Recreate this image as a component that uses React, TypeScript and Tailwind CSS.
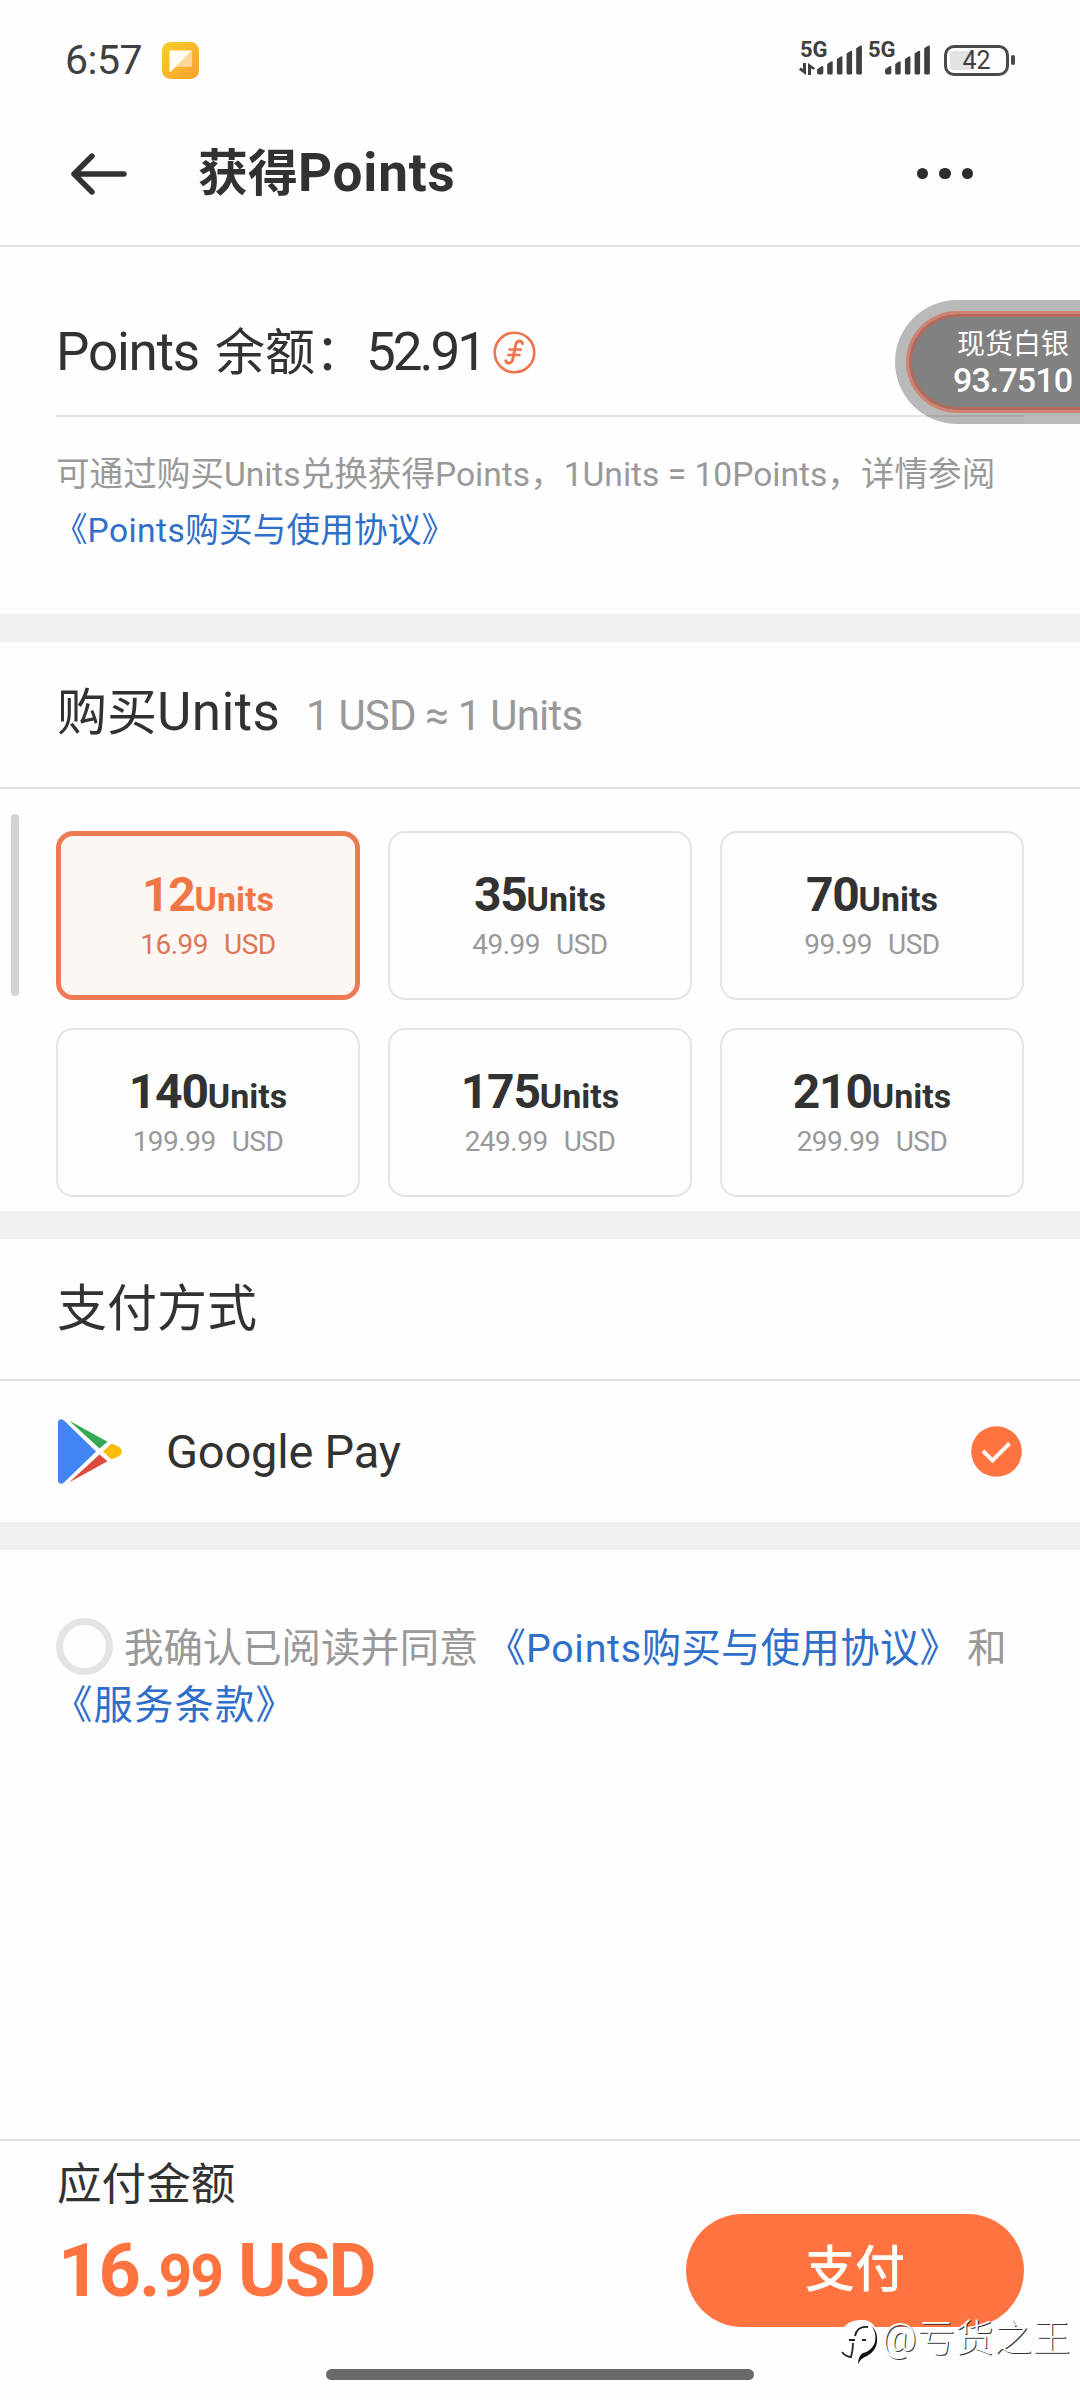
import { useState } from 'react';

const packages = [
  { units: 12, price: '16.99' },
  { units: 35, price: '49.99' },
  { units: 70, price: '99.99' },
  { units: 140, price: '199.99' },
  { units: 175, price: '249.99' },
  { units: 210, price: '299.99' },
];

function SignalBars() {
  return (
    <svg width="46" height="30" viewBox="0 0 46 30" fill="#3f3f3f">
      <path d="M0 25.5 Q0 24 1.5 23.2 L4.5 21.3 Q6.3 20.5 6.3 22.5 V27.5 Q6.3 29.5 4.5 29.5 H2 Q0 29.5 0 27.5Z" />
      <path d="M10.2 19 L14 16.4 Q15.7 15.6 15.7 17.5 V28 Q15.7 29.5 14.2 29.5 H11.7 Q10.2 29.5 10.2 28Z" />
      <path d="M19.9 14 L23.7 11.4 Q25.4 10.6 25.4 12.5 V28 Q25.4 29.5 23.9 29.5 H21.4 Q19.9 29.5 19.9 28Z" />
      <path d="M29.6 8.5 L33.4 5.9 Q35.1 5.1 35.1 7 V28 Q35.1 29.5 33.6 29.5 H31.1 Q29.6 29.5 29.6 28Z" />
      <path d="M39.2 3.3 L43 .7 Q44.9 0 44.9 1.8 V28 Q44.9 29.5 43.4 29.5 H40.7 Q39.2 29.5 39.2 28Z" />
    </svg>
  );
}

function StatusBar() {
  return (
    <div className="flex h-[102px] shrink-0 items-start text-[#3f3f3f]">
      <span className="ml-[65px] mt-[40px] w-[97px] text-[41px] leading-[40px] tracking-[-0.5px]">6:57</span>
      <svg className="mt-[42px]" width="37" height="37" viewBox="0 0 37 37">
        <defs>
          <linearGradient id="note" x1="0" y1="0" x2="1" y2="1">
            <stop offset="0" stopColor="#f6cf2c" />
            <stop offset="1" stopColor="#fb9f2c" />
          </linearGradient>
        </defs>
        <rect width="37" height="37" rx="8.5" fill="url(#note)" />
        <path d="M30 9 V23.5 Q30 25 28.5 25 H13.5Z" fill="#ffd79a" />
        <path d="M8.5 8.5 H30 L8.5 30Q7.5 30.5 7.5 29.5 V9.5 Q7.5 8.5 8.5 8.5Z" fill="#fffdf5" />
      </svg>
      <div className="ml-[600px] mt-[40px] flex h-[36px]">
        <div className="w-[18px]">
          <div className="pl-[1px] text-[22px] font-bold leading-[19px]">5G</div>
          <svg className="mt-[4px]" width="16" height="12" viewBox="0 0 16 12" fill="#3f3f3f">
            <path d="M4 0 H7 V12 L0 6.8 L1.5 4.6 L4 6Z" />
            <path d="M9 0 L16 5 L14.8 6.8 L12 5.4 V12 H9Z" />
          </svg>
        </div>
        <div className="pt-[5px]">
          <SignalBars />
        </div>
        <div className="ml-[5px] w-[17px] text-[22px] font-bold leading-[19px]">5G</div>
        <div className="pt-[5px]">
          <SignalBars />
        </div>
        <div className="ml-[13px] mt-[4px] flex items-center">
          <div className="flex h-[31px] w-[65px] items-center justify-center rounded-[10px] border-[3px] border-[#4a4a4a] bg-linear-to-r from-[#e3e3e3] from-40% to-transparent to-40% bg-clip-content p-[3px] text-[25px] leading-none">
            42
          </div>
          <div className="ml-[2px] h-[10px] w-[4px] rounded-full bg-[#4a4a4a]" />
        </div>
      </div>
    </div>
  );
}

function CoinIcon() {
  return (
    <svg width="43" height="43" viewBox="0 0 43 43" fill="none" stroke="#ec7550" strokeLinecap="round">
      <circle cx="21.5" cy="21.5" r="19.8" strokeWidth="2.6" />
      <path d="M29.5 12.5 C28.5 8.8 23.8 9.2 22.8 13.5 L19.8 28 C18.9 32.8 14 33.5 12.8 29.8" strokeWidth="2.9" />
      <path d="M16.5 18.5 H28 M15.3 24 H26.5" strokeWidth="2.6" />
    </svg>
  );
}

function GooglePlayIcon() {
  return (
    <svg width="65" height="65" viewBox="0 0 65 67" preserveAspectRatio="none">
      <path d="M0 3 Q.5 0 4 .3 L6 1.5 L38 33.5 L6 65.5 L4 66.7 Q.5 67 0 64Z" fill="#4285f4" />
      <path d="M11 1.5 L49.5 23.5 L41.5 30.5Z" fill="#34a853" />
      <path d="M11 65.5 L49.5 43.5 L41.5 36.5Z" fill="#dd4b3e" />
      <path d="M45 33.5 L53.5 25.2 L61 28.5 Q67 33.5 61 38.5 L53.5 41.8Z" fill="#fbbc04" />
    </svg>
  );
}

function PriceTicker() {
  return (
    <div className="absolute left-[895px] top-[300px] h-[124px] w-[185px] rounded-l-full bg-black/27 py-[11px] pl-[11px]">
      <div className="h-[102px] rounded-l-full border-y-[3px] border-l-[3px] border-[#cf8373]">
        <div className="flex h-full flex-col rounded-l-full border-y-[3px] border-l-[3px] border-[#b46a5b] bg-[#818181] pl-[45px] pt-[13px] text-white">
          <span className="whitespace-nowrap text-[28px] leading-[30px]">现货白银</span>
          <span className="-ml-[4px] mt-[3px] text-[34px] font-medium leading-[34px] tracking-[-0.9px]">93.7510</span>
        </div>
      </div>
    </div>
  );
}

function Watermark() {
  return (
    <div className="absolute left-[840px] top-[2316px] flex items-center text-white">
      <svg width="42" height="50" viewBox="0 0 42 50">
        <path d="M2 14 Q8 3 22 4 Q36 4 37 20 Q37 33 26 40 L12 44 L1 38Z" fill="#fff" />
        <path d="M31 10 Q37 16 35 26 Q32 35 23 37 Q18 40 18 48 Q21 42 27 40 Q36 35 37 26 Q38 15 31 10Z" fill="#111" />
        <path d="M28 11 Q17 10 15 20 M9 24 H15 M22 24 H26 M13 27 Q13 34 11 41 Q6 41 2 36" fill="none" stroke="#222" strokeWidth="1.8" />
      </svg>
      <span className="-mt-[7px] whitespace-nowrap text-[38px] font-light leading-[42px] tracking-[0.4px] [text-shadow:1px_1px_0_#333]">@亏货之王</span>
    </div>
  );
}

export default function App() {
  const [selected, setSelected] = useState(12);
  const [agreed, setAgreed] = useState(false);

  return (
    <div className="relative flex h-[2400px] w-[1080px] flex-col overflow-hidden bg-[#fefefe] font-[Roboto,'Noto_Sans_CJK_SC',sans-serif] text-[#323232]">
      <StatusBar />

      <header className="flex h-[145px] shrink-0 items-center border-b-2 border-[#e4e4e4]">
        <svg className="ml-[70px]" width="58" height="42" viewBox="0 0 58 42" fill="none" stroke="#323232" strokeWidth="5.4" strokeLinecap="round" strokeLinejoin="round">
          <path d="M54 21 H4 M22 3 L4 21 L22 39" />
        </svg>
        <h1 className="ml-[70px] whitespace-nowrap text-[50px] font-bold leading-[60px]">
          获得<span className="text-[53px] tracking-[0.8px]">Points</span>
        </h1>
        <div className="ml-auto mr-[107px] flex gap-[11px]">
          <i className="size-[11.5px] rounded-full bg-[#2c2c2c]" />
          <i className="size-[11.5px] rounded-full bg-[#2c2c2c]" />
          <i className="size-[11.5px] rounded-full bg-[#2c2c2c]" />
        </div>
      </header>

      <section className="h-[367px] shrink-0 px-[56px]">
        <div className="flex h-[170px] items-center whitespace-nowrap border-b-2 border-[#e6e6e6] pt-[42px] text-[50px]">
          <div className="flex items-baseline leading-[60px]">
            <span className="w-[159px] text-[53px] tracking-[-1.2px]">Points</span>
            <span className="w-[151px]">余额：</span>
            <span className="text-[53px] tracking-[-3px]">52.91</span>
          </div>
          <span className="ml-auto mr-[488px]">
            <CoinIcon />
          </span>
        </div>
        <p className="whitespace-nowrap pt-[30px] text-[33.6px] leading-[56px] text-[#999999]">
          可通过购买Units兑换获得Points，1Units = 10Points，详情参阅
          <br />
          <a className="-ml-[2px] text-[#2f6ec9]">
            《<span className="tracking-[0.4px]">Points</span>
            <span className="tracking-[0.2px]">购买与使用协议》</span>
          </a>
        </p>
      </section>

      <div className="h-[28px] shrink-0 bg-[#eff0f2]" />

      <section className="h-[569px] shrink-0">
        <div className="flex h-[147px] items-baseline whitespace-nowrap border-b-2 border-[#e4e4e4] pl-[57px] pt-[38px] leading-[64px]">
          <h2 className="w-[249px] text-[50px]">
            购买<span className="text-[53px] tracking-[0.4px]">Units</span>
          </h2>
          <span className="text-[42px] tracking-[-0.8px] text-[#999999]">1 USD ≈ 1 Units</span>
        </div>
        <div className="flex pt-[25px]">
          <div className="ml-[11px] h-[182px] w-[8px] rounded-full bg-[#d3d3d3]" />
          <div className="ml-[37px] mt-[17px] grid grid-cols-[304px_304px_304px] gap-[28px]">
            {packages.map((item) => {
              const active = item.units === selected;
              return (
                <button
                  key={item.units}
                  onClick={() => setSelected(item.units)}
                  className={`flex h-[169px] flex-col items-center justify-center rounded-[17px] pt-[2px] ${
                    active ? 'border-[5px] border-[#ec7a54] bg-[#fdf7f4] text-[#f27546]' : 'border-2 border-[#e4e4e4]'
                  }`}
                >
                  <span className="text-[48px] font-bold leading-[48px] tracking-[-1.2px]">
                    {item.units}
                    <span className="text-[34px] tracking-[0px]">Units</span>
                  </span>
                  <span className={`mt-[4px] text-[28px] leading-[36px] tracking-[-0.5px] ${active ? 'text-[#dd7558]' : 'text-[#999999]'}`}>
                    {item.price}
                    <span className="ml-[16px]">USD</span>
                  </span>
                </button>
              );
            })}
          </div>
        </div>
      </section>

      <div className="h-[28px] shrink-0 bg-[#eff0f2]" />

      <section className="h-[283px] shrink-0">
        <h2 className="h-[142px] border-b-2 border-[#e4e4e4] pl-[57px] pt-[38px] text-[50px] leading-[64px]">支付方式</h2>
        <div className="flex h-[141px] items-center pl-[58px] pr-[58px]">
          <GooglePlayIcon />
          <span className="ml-[43px] pt-[2px] text-[47px] tracking-[-0.2px]">Google Pay</span>
          <svg className="ml-auto" width="51" height="51" viewBox="0 0 51 51">
            <circle cx="25.5" cy="25.5" r="25.3" fill="#ff7340" />
            <path d="M12 25 L21.5 34.5 L38.5 17.5" fill="none" stroke="#fff8f0" strokeWidth="4" />
          </svg>
        </div>
      </section>

      <div className="h-[28px] shrink-0 bg-[#eff0f2]" />

      <section className="px-[56px] pt-[68px] text-[39.4px] leading-[56px] text-[#999999]">
        <div className="flex whitespace-nowrap">
          <button onClick={() => setAgreed(!agreed)} className={`mr-[11px] size-[57px] shrink-0 rounded-full border-[7px] ${agreed ? 'border-[#ff7340]' : 'border-[#e4e4e4]'}`} />
          <div className="flex pt-[3px]">
            我确认已阅读并同意
            <a className="ml-[8px] text-[#2f6ec9]">
              《<span className="tracking-[0.7px]">Points</span>
              <span className="tracking-[0.3px]">购买与使用协议》</span>
            </a>
            <span className="ml-[8px]">和</span>
          </div>
        </div>
        <a className="-ml-[3px] block pt-px tracking-[1.1px] text-[#2f6ec9]">《服务条款》</a>
      </section>

      <footer className="mt-auto h-[261px] shrink-0 border-t-2 border-[#e4e4e4] pl-[56px]">
        <div className="flex h-[228px]">
          <div className="pt-[17px]">
            <div className="pl-px text-[44.6px] leading-[54px]">应付金额</div>
            <div className="whitespace-nowrap pl-[2px] pt-[19px] text-[74px] font-bold leading-[80px] tracking-[-2px] text-[#ff7340]">
              16.<span className="text-[59px]">99</span>
              <span className="ml-[16px] tracking-[-2px]">USD</span>
            </div>
          </div>
          <button className="ml-auto mr-[56px] mt-[73px] h-[113px] w-[338px] rounded-full bg-[#ff7340] text-[50px] font-medium text-[#fffdf8]">支付</button>
        </div>
        <div className="ml-[270px] h-[11px] w-[428px] rounded-full bg-[#6a6a6a]" />
      </footer>

      <PriceTicker />
      <Watermark />
    </div>
  );
}
